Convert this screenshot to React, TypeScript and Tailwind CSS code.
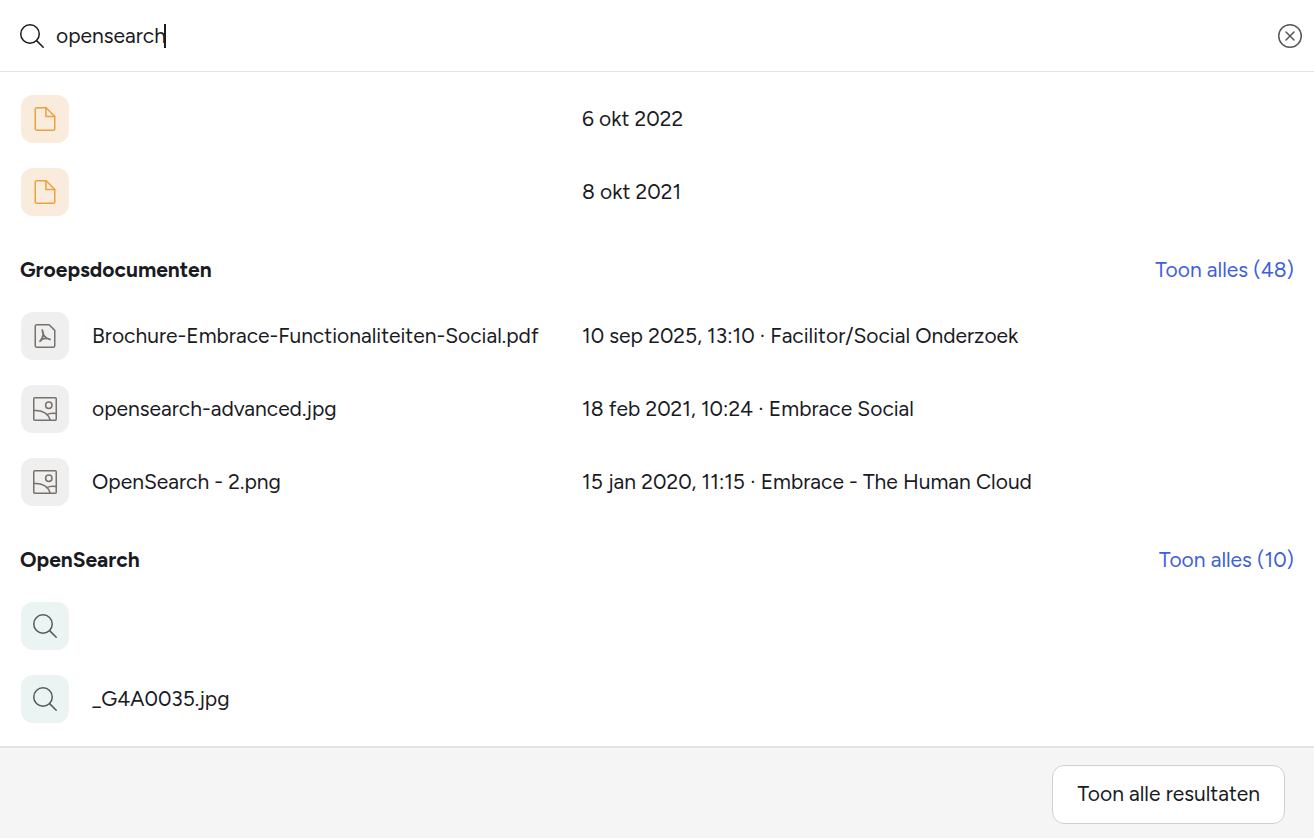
import { useState } from 'react'
import type { ReactNode } from 'react'

type Kind = 'page' | 'pdf' | 'image' | 'search'

interface Result {
  kind: Kind
  name?: string
  meta?: string
}

interface Group {
  title?: string
  total?: number
  results: Result[]
}

const groups: Group[] = [
  {
    results: [
      { kind: 'page', meta: '6 okt 2022' },
      { kind: 'page', meta: '8 okt 2021' },
    ],
  },
  {
    title: 'Groepsdocumenten',
    total: 48,
    results: [
      {
        kind: 'pdf',
        name: 'Brochure-Embrace-Functionaliteiten-Social.pdf',
        meta: '10 sep 2025, 13:10 · Facilitor/Social Onderzoek',
      },
      {
        kind: 'image',
        name: 'opensearch-advanced.jpg',
        meta: '18 feb 2021, 10:24 · Embrace Social',
      },
      {
        kind: 'image',
        name: 'OpenSearch - 2.png',
        meta: '15 jan 2020, 11:15 · Embrace - The Human Cloud',
      },
    ],
  },
  {
    title: 'OpenSearch',
    total: 10,
    results: [{ kind: 'search' }, { kind: 'search', name: '_G4A0035.jpg' }],
  },
]

const tileClass: Record<Kind, string> = {
  page: 'bg-[#faecdc] text-[#eba13c]',
  pdf: 'bg-[#efefef] text-[#79716b]',
  image: 'bg-[#efefef] text-[#79716b]',
  search: 'bg-[#ebf4f3] text-[#55595b]',
}

function Icon({ children }: { children: ReactNode }) {
  return (
    <svg
      viewBox="0 0 24 24"
      className="size-6 shrink-0"
      fill="none"
      stroke="currentColor"
      strokeWidth={1.5}
      strokeLinecap="round"
      strokeLinejoin="round"
      aria-hidden="true"
    >
      {children}
    </svg>
  )
}

function SearchIcon() {
  return (
    <Icon>
      <circle cx="10" cy="10" r="9.25" />
      <path d="M16.6 16.6 23.2 23.2" />
    </Icon>
  )
}

function KindIcon({ kind }: { kind: Kind }) {
  if (kind === 'search') return <SearchIcon />
  if (kind === 'page')
    return (
      <Icon>
        <path d="M3.75.75h9.3l8.7 8.7v12.3a1.5 1.5 0 0 1-1.5 1.5H3.75a1.5 1.5 0 0 1-1.500-1.500V2.250a1.500 1.500 0 0 1 1.500-1.500Z" />
        <path d="M12.900.9v8.700h8.700" />
      </Icon>
    )
  if (kind === 'pdf')
    return (
      <Icon>
        <path d="M3.75.75h12.4l5.6 5.6v15.4a1.5 1.5 0 0 1-1.5 1.5H3.75a1.5 1.5 0 0 1-1.5-1.5V2.25a1.5 1.5 0 0 1 1.5-1.5Z" />
        <path
          strokeWidth={1.75}
          d="M9.300 6c0 4.300 2.900 8.400 7.700 9.400M9.300 6c1.600 3.500.6 8-2.200 11.200M7.100 17.200c2-2.500 5.700-3.500 9.900-1.800"
        />
      </Icon>
    )
  return (
    <Icon>
      <rect x=".75" y=".75" width="22.5" height="22.5" rx="1" />
      <circle cx="15.8" cy="8.3" r="3.2" />
      <path d="M.75 13.500c8-.8 15 3 16.300 9.700M13.600 17.700c2.800-1.500 6-1.900 9.600-1.200" />
    </Icon>
  )
}

function ResultRow({ result }: { result: Result }) {
  return (
    <li>
      <a
        href="#"
        className="grid grid-cols-[48px_minmax(0,467fr)_minmax(0,712fr)] items-center gap-x-[23px]"
      >
        <span
          className={`grid size-12 place-items-center rounded-xl ${tileClass[result.kind]}`}
        >
          <KindIcon kind={result.kind} />
        </span>
        <span className="truncate">{result.name}</span>
        <span className="truncate">{result.meta}</span>
      </a>
    </li>
  )
}

function ResultGroup({ group }: { group: Group }) {
  return (
    <section>
      {group.title && (
        <div className="mb-7 flex items-center justify-between">
          <h2 className="font-bold">{group.title}</h2>
          <a href="#" className="text-[#3f5fdb]">
            Toon alles ({group.total})
          </a>
        </div>
      )}
      <ul className="flex flex-col gap-[25px] pl-px">
        {group.results.map((r, i) => (
          <ResultRow key={i} result={r} />
        ))}
      </ul>
    </section>
  )
}

export default function App() {
  const [query, setQuery] = useState('opensearch')

  return (
    <div className="flex min-h-screen flex-col bg-white font-['Figtree','Inter',sans-serif] text-[21px] leading-7 text-[#1a1b1f]">
      <header className="flex h-[72px] items-center border-b border-[#e4e4e4] pr-3 pl-5">
        <label className="flex flex-1 items-center gap-3">
          <SearchIcon />
          <span className="flex items-center">
            <input
              type="text"
              aria-label="Zoeken"
              value={query}
              onChange={e => setQuery(e.target.value)}
              className="field-sizing-content caret-transparent outline-none"
            />
            <span className="-ml-0.5 h-6 w-0.5 bg-[#1a1b1f]" />
          </span>
        </label>
        <button
          type="button"
          aria-label="Wissen"
          className="text-[#55565a]"
          onClick={() => setQuery('')}
        >
          <Icon>
            <circle cx="12" cy="12" r="11.25" />
            <path d="m8 8 8 8M16 8l-8 8" />
          </Icon>
        </button>
      </header>

      <main className="flex flex-1 flex-col gap-10 px-5 py-[23px]">
        {groups.map((g, i) => (
          <ResultGroup key={i} group={g} />
        ))}
      </main>

      <footer className="flex justify-end border-t-2 border-[#e4e4e4] bg-[#f5f5f5] pt-[17px] pr-[29px] pb-3.5">
        <button
          type="button"
          className="rounded-xl border border-[#d0d0d0] bg-white px-6 pt-3.5 pb-[15px]"
        >
          Toon alle resultaten
        </button>
      </footer>
    </div>
  )
}
